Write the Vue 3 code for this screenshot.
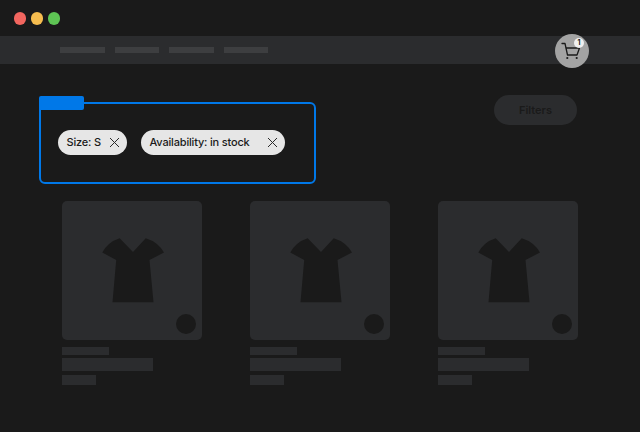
<script setup>
const navItems = [45, 44, 45, 44]
const filters = [
  { label: 'Size: S', width: 69 },
  { label: 'Availability: in stock', width: 144 },
]
const products = [1, 2, 3]
</script>

<template>
  <div class="page">
    <div class="titlebar">
      <span class="light red"></span>
      <span class="light yellow"></span>
      <span class="light green"></span>
    </div>

    <nav class="nav">
      <span v-for="(w, i) in navItems" :key="i" class="nav-item" :style="{ width: w + 'px' }"></span>
      <div class="cart">
        <svg width="22" height="22" viewBox="0 0 22 22" fill="none" stroke="#1a1a1a" stroke-width="1.3" stroke-linecap="round" stroke-linejoin="round">
          <path d="M1 3.5h3l2.5 11.5H16L18.5 8H4.8" />
          <circle cx="6.3" cy="18" r="1.1" fill="#1a1a1a" stroke="none" />
          <circle cx="15.7" cy="18" r="1.1" fill="#1a1a1a" stroke="none" />
        </svg>
        <span class="badge">1</span>
      </div>
    </nav>

    <main class="main">
      <div class="toolbar">
        <section class="highlight">
          <span class="tab"></span>
          <div v-for="f in filters" :key="f.label" class="chip" :style="{ width: f.width + 'px' }">
            <span class="chip-label">{{ f.label }}</span>
            <svg width="11" height="11" viewBox="0 0 11 11" stroke="#2a2a2a" stroke-width="1">
              <path d="M1 1l9 9M10 1l-9 9" />
            </svg>
          </div>
        </section>
        <button class="filters">Filters</button>
      </div>

      <div class="grid">
        <article v-for="p in products" :key="p" class="product">
          <div class="thumb">
            <svg width="62" height="65" viewBox="0 0 62 65">
              <path fill="#1a1a1a" d="M.3 14.5Q6 4 17.7.3L31 14 43.7.3Q56 4 62 14.5L47.5 22 51.5 64.3H10.5L14.2 22Z" />
            </svg>
            <span class="dot"></span>
          </div>
          <div class="line short"></div>
          <div class="line title"></div>
          <div class="line price"></div>
        </article>
      </div>
    </main>
  </div>
</template>

<style scoped>
.page {
  width: 640px;
  height: 432px;
  overflow: hidden;
  background: #1a1a1a;
  font-family: Inter, "Liberation Sans", sans-serif;
}

.titlebar {
  box-sizing: border-box;
  height: 36px;
  display: flex;
  align-items: center;
  gap: 4.4px;
  padding: 1px 0 0 13.7px;
}

.light {
  width: 12.6px;
  height: 12.6px;
  border-radius: 50%;
}
.red { background: #f2665f; }
.yellow { background: #f6bd4f; }
.green { background: #5ec454; }

.nav {
  height: 28px;
  display: flex;
  align-items: center;
  gap: 10px;
  padding: 0 51px 0 60px;
  background: #2b2c2e;
}

.nav-item {
  height: 6px;
  background: #3d3e40;
}

.cart {
  position: relative;
  width: 34px;
  height: 34px;
  flex: none;
  margin: 2px 0 0 auto;
  display: flex;
  align-items: center;
  justify-content: center;
  border-radius: 50%;
  background: #a3a3a3;
}

.badge {
  position: absolute;
  top: 4px;
  right: 5px;
  width: 10px;
  height: 10px;
  border-radius: 50%;
  background: #f0f0f0;
  color: #1a1a1a;
  font-size: 7px;
  font-weight: 700;
  line-height: 10px;
  text-align: center;
}

.main {
  padding-top: 31px;
}

.toolbar {
  display: flex;
  align-items: flex-start;
  padding: 0 63px 0 39px;
}

.highlight {
  position: relative;
  box-sizing: border-box;
  width: 277px;
  height: 82px;
  margin-top: 7px;
  padding: 26px 0 0 17px;
  display: flex;
  align-items: flex-start;
  gap: 14px;
  border: 2px solid #0078e8;
  border-radius: 6px;
}

.tab {
  position: absolute;
  top: -8px;
  left: -2px;
  width: 45px;
  height: 14px;
  border-radius: 2px;
  background: #0078e8;
}

.chip {
  box-sizing: border-box;
  height: 25px;
  display: flex;
  align-items: center;
  justify-content: space-between;
  padding: 0 7px 0 8.5px;
  border-radius: 13px;
  background: #e6e6e6;
  color: #1a1a1a;
  font-size: 11px;
  font-weight: 500;
  letter-spacing: -0.18px;
  white-space: nowrap;
}

.chip-label {
  margin-top: -2px;
}

.filters {
  width: 83px;
  height: 30px;
  margin-left: auto;
  padding: 0;
  border: 0;
  border-radius: 15px;
  background: #2b2c2e;
  color: #1a1a1a;
  font-family: inherit;
  font-size: 11px;
  font-weight: 600;
}

.grid {
  display: grid;
  grid-template-columns: repeat(3, 140px);
  gap: 48px;
  margin-top: 17px;
  padding-left: 62px;
}

.thumb {
  position: relative;
  height: 139px;
  display: flex;
  align-items: center;
  justify-content: center;
  border-radius: 5px;
  background: #2b2c2e;
}

.thumb svg {
  margin-left: 2px;
}

.dot {
  position: absolute;
  right: 6px;
  bottom: 6px;
  width: 20px;
  height: 20px;
  border-radius: 50%;
  background: #1a1a1a;
}

.line {
  background: #2b2c2e;
}

.short {
  width: 47px;
  height: 8px;
  margin-top: 7px;
}

.title {
  width: 91px;
  height: 13px;
  margin-top: 3px;
}

.price {
  width: 34px;
  height: 10px;
  margin-top: 4px;
}
</style>
